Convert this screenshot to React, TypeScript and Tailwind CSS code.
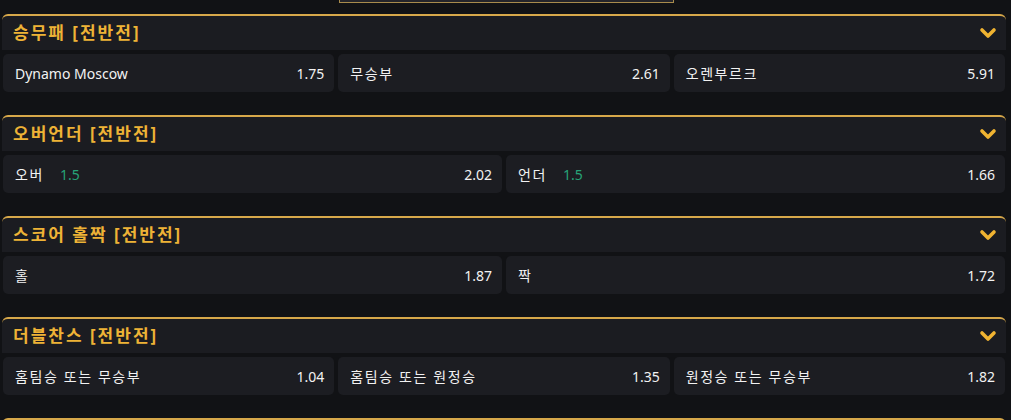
import { ChevronDown } from "lucide-react"

type Pick = {
    label: string
    odds: string
    line?: string
}

type Market = {
    title: string
    picks: Pick[]
}

const markets: Market[] = [
    {
        title: "승무패 [전반전]",
        picks: [
            { label: "Dynamo Moscow", odds: "1.75" },
            { label: "무승부", odds: "2.61" },
            { label: "오렌부르크", odds: "5.91" },
        ],
    },
    {
        title: "오버언더 [전반전]",
        picks: [
            { label: "오버", odds: "2.02", line: "1.5" },
            { label: "언더", odds: "1.66", line: "1.5" },
        ],
    },
    {
        title: "스코어 홀짝 [전반전]",
        picks: [
            { label: "홀", odds: "1.87" },
            { label: "짝", odds: "1.72" },
        ],
    },
    {
        title: "더블찬스 [전반전]",
        picks: [
            { label: "홈팀승 또는 무승부", odds: "1.04" },
            { label: "홈팀승 또는 원정승", odds: "1.35" },
            { label: "원정승 또는 무승부", odds: "1.82" },
        ],
    },
    // next market, only its top edge is in view
    {
        title: "",
        picks: [],
    },
]

const hangul = /[\uac00-\ud7a3]/

const MarketPanel = ({ market }: { market: Market }) => {
    const cols = market.picks.length === 3 ? "grid-cols-3" : "grid-cols-2"

    return (
        <div className="flex flex-col">
            <div className="flex h-[36px] items-center justify-between rounded-t-[6px] border-t-2 border-[#d7a84a] bg-[#1b1c21] pl-[11px] pr-[6px]">
                <span className="text-[17px] font-bold tracking-[2px] text-[#eeb336]">{market.title}</span>
                <ChevronDown size={24} strokeWidth={3.6} className="text-[#f0b331]" />
            </div>
            {market.picks.length > 0 &&
                <div className={`mt-[4px] grid ${cols} gap-[4px] pl-px pr-px`}>
                    {market.picks.map((pick) => (
                        <div key={pick.label} className="flex h-[38px] items-center justify-between rounded-[5px] bg-[#1c1d22] pl-[12px] pr-[10px] text-[14px] text-[#f2f2f2]">
                            <div className="flex items-center gap-[16px]">
                                <span className={hangul.test(pick.label) ? "tracking-[1.6px]" : ""}>{pick.label}</span>
                                {pick.line && <span className="text-[#27a377]">{pick.line}</span>}
                            </div>
                            <span>{pick.odds}</span>
                        </div>
                    ))}
                </div>
            }
        </div>
    )
}

export default function App() {
    return (
        <div className="h-[420px] w-[1011px] overflow-hidden bg-[#111215] font-['Noto_Sans','Noto_Sans_CJK_KR',sans-serif]">
            <div className="flex justify-center pl-[2px]">
                <div className="h-[3px] w-[335px] border-x border-b border-[#a88b4c] bg-[#24242a]" />
            </div>
            <div className="mt-[11px] flex flex-col gap-[23px] pl-[2px] pr-[5px]">
                {markets.map((market, i) => (
                    <MarketPanel key={i} market={market} />
                ))}
            </div>
        </div>
    )
}
